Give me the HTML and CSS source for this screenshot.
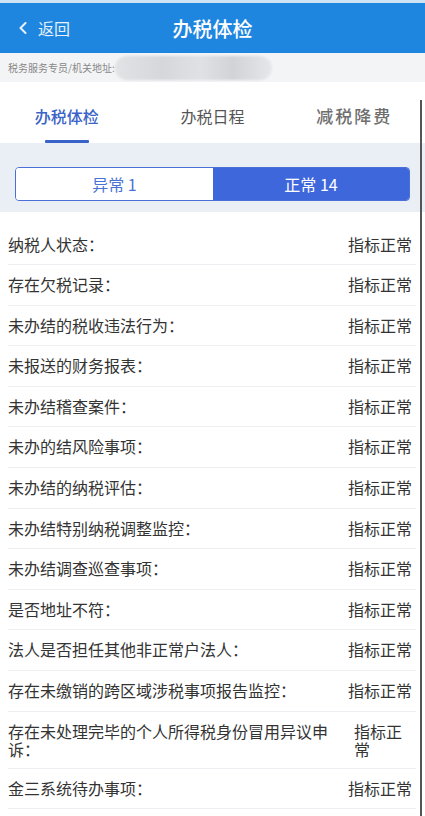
FILE: index.html
```html
<!DOCTYPE html>
<html lang="zh-CN">
<head>
    <meta charset="UTF-8">
    <meta name="viewport" content="width=device-width, initial-scale=1.0">
    <title>办税体检</title>
    <link rel="stylesheet" href="styles.css">
</head>
<body>

    <div class="topline"></div>
    <header class="header">
        <div class="back">
            <svg class="chev" width="10" height="12" viewBox="0 0 10 12">
                <path d="M7.5 1 L2.5 6 L7.5 11" fill="none" stroke="#e6f1fc" stroke-width="2" stroke-linecap="round" stroke-linejoin="round"/>
            </svg>
            <span>返回</span>
        </div>
        <h1 class="title">办税体检</h1>
        <div></div>
    </header>

    <div class="addr">
        <span>税务服务专员/机关地址:</span>
        <span class="blur"></span>
    </div>

    <nav class="tabs">
        <div class="tab active"><span>办税体检</span><i class="bar"></i></div>
        <div class="tab"><span>办税日程</span></div>
        <div class="tab spaced"><span>减税降费</span></div>
    </nav>

    <div class="filter">
        <div class="seg">
            <div class="seg-item">异常 1</div>
            <div class="seg-item on">正常 14</div>
        </div>
    </div>

    <ul class="list">
        <li class="row"><span class="name">纳税人状态：</span><span class="val">指标正常</span></li>
        <li class="row"><span class="name">存在欠税记录：</span><span class="val">指标正常</span></li>
        <li class="row"><span class="name">未办结的税收违法行为：</span><span class="val">指标正常</span></li>
        <li class="row"><span class="name">未报送的财务报表：</span><span class="val">指标正常</span></li>
        <li class="row"><span class="name">未办结稽查案件：</span><span class="val">指标正常</span></li>
        <li class="row"><span class="name">未办的结风险事项：</span><span class="val">指标正常</span></li>
        <li class="row"><span class="name">未办结的纳税评估：</span><span class="val">指标正常</span></li>
        <li class="row"><span class="name">未办结特别纳税调整监控：</span><span class="val">指标正常</span></li>
        <li class="row"><span class="name">未办结调查巡查事项：</span><span class="val">指标正常</span></li>
        <li class="row"><span class="name">是否地址不符：</span><span class="val">指标正常</span></li>
        <li class="row"><span class="name">法人是否担任其他非正常户法人：</span><span class="val">指标正常</span></li>
        <li class="row"><span class="name">存在未缴销的跨区域涉税事项报告监控：</span><span class="val">指标正常</span></li>
        <li class="row multi"><span class="name">存在未处理完毕的个人所得税身份冒用异议申诉：</span><span class="val">指标正常</span></li>
        <li class="row"><span class="name">金三系统待办事项：</span><span class="val">指标正常</span></li>
    </ul>

    <div class="scrollbar"></div>

</body>
</html>
```

FILE: styles.css
```css
body {
    margin: 0;
    font-family: "Noto Sans CJK SC", "Noto Sans", sans-serif;
    color: #333;
    background: #fff;
}
.topline {
    height: 3px;
    background: #cfe3f7;
}
.header {
    height: 50px;
    background: #1f86e0;
    display: grid;
    grid-template-columns: 1fr auto 1fr;
    align-items: center;
}
.back {
    display: flex;
    align-items: center;
    gap: 10px;
    padding-left: 18px;
    color: #e6f1fc;
    font-size: 16px;
}
.title {
    margin: 0;
    font-size: 20px;
    font-weight: 500;
    color: #fff;
}
.addr {
    height: 29px;
    background: #f3f4f6;
    box-shadow: 0 3px 4px rgba(0, 0, 0, 0.18);
    display: flex;
    align-items: center;
    padding-left: 8px;
    font-size: 10px;
    color: #888;
}
.blur {
    width: 157px;
    height: 24px;
    border-radius: 12px;
    background: linear-gradient(90deg, #e2e3e6, #d6d7da 30%, #e0e1e4 55%, #d2d3d6 75%, #e6e7ea);
    filter: blur(1px);
}
.tabs {
    display: grid;
    grid-template-columns: 1fr 1fr 1fr;
    height: 61px;
    background: #fff;
}
.tab {
    display: flex;
    flex-direction: column;
    align-items: center;
    padding-top: 24px;
    font-size: 16px;
    line-height: 20px;
    color: #555;
}
.tab.active {
    color: #3a63c7;
    font-weight: 500;
    margin-left: -8px;
}
.tab.spaced {
    font-size: 17px;
    letter-spacing: 2px;
    font-weight: 500;
    color: #6e6e6e;
}
.bar {
    width: 44px;
    height: 3px;
    margin-top: 14px;
    background: #3a63c7;
    border-radius: 1px;
}
.filter {
    background: #e9eff5;
    padding: 24px 15px 11px;
}
.seg {
    display: grid;
    grid-template-columns: 197px 1fr;
    height: 34px;
    border: 1px solid #4a6fd8;
    border-radius: 4px;
    overflow: hidden;
    box-sizing: border-box;
}
.seg-item {
    display: flex;
    align-items: center;
    justify-content: center;
    font-size: 16px;
    color: #4a72d6;
    background: #fff;
}
.seg-item.on {
    background: #3f67dc;
    color: #fff;
}
.list {
    list-style: none;
    margin: 0 9px 0 8px;
    padding: 12.5px 0 0;
}
.row {
    display: flex;
    justify-content: space-between;
    gap: 14px;
    padding: 10px 4px 10px 0;
    line-height: 19.6px;
    font-size: 16px;
    border-bottom: 1px solid #eceef1;
}
.val {
    flex-shrink: 0;
}
.row.multi {
    justify-content: flex-start;
    gap: 16px;
    line-height: 18px;
}
.row.multi .name {
    width: 330px;
}
.row.multi .val {
    width: 3em;
}
.scrollbar {
    position: fixed;
    top: 100px;
    bottom: 0;
    right: 3px;
    width: 2px;
    background: #555;
}
```
